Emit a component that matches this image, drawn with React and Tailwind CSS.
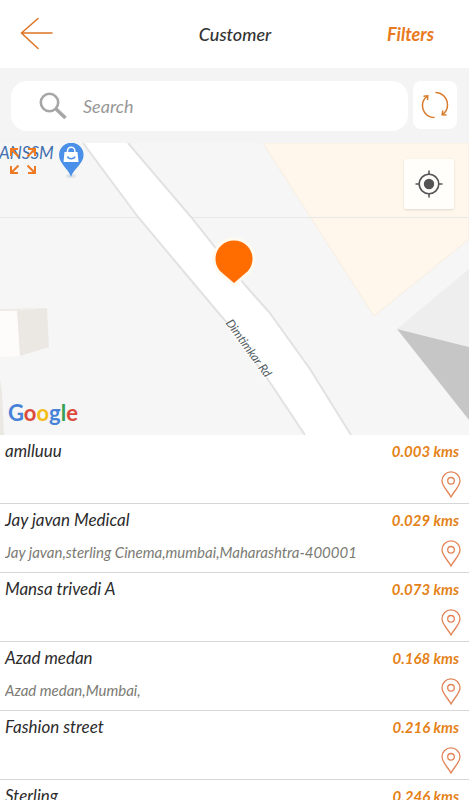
import { useState } from "react";

const customers = [
  { id: 1, name: "amlluuu", address: "", distance: "0.003" },
  {
    id: 2,
    name: "Jay javan Medical",
    address: "Jay javan,sterling Cinema,mumbai,Maharashtra-400001",
    distance: "0.029",
  },
  { id: 3, name: "Mansa trivedi A", address: "", distance: "0.073" },
  { id: 4, name: "Azad medan", address: "Azad medan,Mumbai,", distance: "0.168" },
  { id: 5, name: "Fashion street", address: "", distance: "0.216" },
  { id: 6, name: "Sterling", address: "", distance: "0.246" },
];

const BackIcon = () => (
  <svg width="34" height="34" viewBox="0 0 34 34" fill="none" stroke="#dd7424" strokeWidth="1.5" strokeLinecap="round">
    <path d="M18 1.5 1.5 16 18 31.5M1.5 16H32" />
  </svg>
);

const SearchIcon = () => (
  <svg className="shrink-0" width="28" height="28" viewBox="0 0 28 28" fill="none" stroke="#a6a6a6">
    <circle cx="10.5" cy="10.5" r="8.7" strokeWidth="2.6" />
    <path d="m17 17 9.5 9" strokeWidth="3.6" />
  </svg>
);

const RefreshIcon = () => (
  <svg width="28" height="28" viewBox="0 0 28 28" fill="none" stroke="#d87a2c" strokeWidth="1.5">
    <path d="M14.5 1.5C21.5 1.5 26.5 7.500 26.500 14c0 4-1.800 7.300-5 9.600" />
    <path d="M21.800 19.500l-.6 4.200 4.300.2" />
    <path d="M13.500 26.500C6.500 26.500 1.500 21 1.500 14.500c0-3.700 1.600-7.200 5-9.500" />
    <path d="M2.500 5.200 6.800 4.800 6.500 9" />
  </svg>
);

const ExpandIcon = () => (
  <svg width="28" height="28" viewBox="0 0 28 28" fill="none" stroke="#ee7a24" strokeWidth="2">
    <path d="M2 9V2h7M2 2l7.500 7.500M19 2h7v7M26 2l-7.500 7.500" />
    <path d="M2 19v7h7M2 26l7.500-7.500M19 26h7v-7M26 26l-7.500-7.500" />
  </svg>
);

const LocateIcon = () => (
  <svg width="28" height="28" viewBox="0 0 28 28" fill="none" stroke="#555555" strokeWidth="1.6">
    <circle cx="14" cy="14" r="9.8" />
    <circle cx="14" cy="14" r="5.2" fill="#555555" stroke="none" />
    <path d="M14 .5V4M14 24v3.5M.5 14H4M24 14h3.5" />
  </svg>
);

const PinIcon = () => (
  <svg width="20" height="27" viewBox="0 0 20 27" fill="none" stroke="#e28355" strokeWidth="1.3">
    <path d="M10 26C7 20 1 15.5 1 9.800a9 9 0 0 1 18 0C19 15.5 13 20 10 26Z" />
    <circle cx="10" cy="9.8" r="3.3" />
  </svg>
);

const MapCanvas = () => (
  <svg
    className="block h-full w-full"
    viewBox="0 0 469 292"
    preserveAspectRatio="xMidYMid slice"
    role="img"
    aria-label="Map"
  >
    <rect width="469" height="292" fill="#f6f6f6" />
    <path d="M263 0H469V96L374 173Z" fill="#fff6ec" stroke="#f6e9d8" strokeWidth=".7" />
    <path d="M397 186 469 126V204Z" fill="#eeeeee" />
    <path d="M397 186 469 204V277Z" fill="#c6c6c6" />

    {/* buildings */}
    <path d="M0 166 47 165 18 168H0Z" fill="#efebe7" />
    <path d="M0 168H18L20 213 0 214Z" fill="#fdfcfa" />
    <path d="M17 168 47 165 49 204 20 213Z" fill="#ebe8e4" />
    <path d="M0 236 2 250 4 292H0Z" fill="#ebe8e4" />

    <path d="M0 74.5H469" stroke="#e8e8e8" />

    {/* road */}
    <path d="M83 0 138 74 195 142 228 181 267 235 305 292H351L310 226 269 169 245 142 191 74 128 0Z" fill="#ffffff" />
    <path
      d="M83 0 138 74 195 142 228 181 267 235 305 292M351 292 310 226 269 169 245 142 191 74 128 0"
      fill="none"
      stroke="#e2e2e2"
      strokeWidth="2"
    />
    <text
      transform="translate(249 205) rotate(54)"
      textAnchor="middle"
      dominantBaseline="central"
      fontSize="12"
      fontStyle="italic"
      fill="#515a60"
      stroke="#ffffff"
      strokeWidth="2"
      paintOrder="stroke"
    >
      Dimtimkar Rd
    </text>

    {/* shop */}
    <ellipse cx="71" cy="33" rx="5" ry="2" fill="#dfe3e8" />
    <path d="M71 34C69 26 59 21 59 12a12.300 12.300 0 0 1 24.600 0C83.600 21 73 26 71 34Z" fill="#4a90e8" />
    <path d="M64.5 9H77.500L78.500 19H63.500Z" fill="#ffffff" />
    <path d="M67.5 9V8a3.700 3.700 0 0 1 7.400 0v1" fill="none" stroke="#ffffff" strokeWidth="1.5" />
    <path d="M67.5 13.500c1 3 6.500 3 7.500 0" fill="none" stroke="#4a90e8" strokeWidth="1.5" />
    <text x="-1" y="16" fontSize="17" fontStyle="italic" fill="#3f6fae">
      ANSSM
    </text>

    <path
      d="M234 140 220 128a18.500 18.500 0 1 1 28 0Z"
      fill="#ff6d00"
      stroke="#fffaf0"
      strokeWidth="6"
      strokeLinejoin="round"
      paintOrder="stroke"
    />
  </svg>
);

const CustomerRow = ({ customer }) => (
  <li className="flex h-[69px] shrink-0 justify-between border-b border-[#d6d6d6] pl-[5px] pr-2">
    <div className="min-w-0 pt-1.5">
      <h2 className="text-[17px] leading-5 text-[#2b2b2b]">{customer.name}</h2>
      {customer.address && (
        <p className="mt-3 truncate text-[15px] leading-5 text-[#7b7b74]">{customer.address}</p>
      )}
    </div>
    <div className="flex shrink-0 flex-col items-end pt-1.5">
      <span className="pr-0.5 text-[15px] font-bold leading-5 text-[#e58217]">{customer.distance} kms</span>
      <button type="button" className="mt-2.5" aria-label={`Show ${customer.name} on map`}>
        <PinIcon />
      </button>
    </div>
  </li>
);

const App = () => {
  const [search, setSearch] = useState("");

  return (
    <div className="flex h-screen flex-col overflow-hidden bg-white font-['Lato',sans-serif] italic">
      <header className="grid h-[68px] shrink-0 grid-cols-3 items-center pl-5 pr-[35px]">
        <button type="button" className="justify-self-start" aria-label="Back">
          <BackIcon />
        </button>
        <h1 className="justify-self-center pl-4 text-lg font-medium text-[#333333]">Customer</h1>
        <button type="button" className="justify-self-end text-lg font-bold text-[#e9791f]">
          Filters
        </button>
      </header>

      <div className="flex h-[75px] shrink-0 gap-[5px] bg-[#f4f4f4] pb-3 pl-[11px] pr-3 pt-[13px]">
        <label className="flex min-w-0 flex-1 items-center gap-4 rounded-2xl bg-white pl-7">
          <SearchIcon />
          <input
            type="text"
            aria-label="Search"
            value={search}
            onChange={(e) => setSearch(e.target.value)}
            className="w-full min-w-0 bg-transparent text-lg italic text-gray-700 placeholder-[#979797] focus:outline-none"
            placeholder="Search"
          />
        </label>
        <button
          type="button"
          className="flex h-12 w-11 items-center justify-center rounded-lg bg-white"
          aria-label="Refresh"
        >
          <RefreshIcon />
        </button>
      </div>

      <section className="relative h-[292px] shrink-0">
        <MapCanvas />
        <button type="button" className="absolute left-[9px] top-1" aria-label="Expand map">
          <ExpandIcon />
        </button>
        <button
          type="button"
          className="absolute right-[15px] top-4 flex size-[50px] items-center justify-center rounded-xs bg-[#fffefb] shadow"
          aria-label="My location"
        >
          <LocateIcon />
        </button>
        <div className="absolute bottom-2 left-2 text-[22px] font-bold not-italic leading-7">
          <span className="text-[#4682d8]">G</span>
          <span className="text-[#db4a3b]">o</span>
          <span className="text-[#f3bd17]">o</span>
          <span className="text-[#4682d8]">g</span>
          <span className="text-[#36a156]">l</span>
          <span className="text-[#db4a3b]">e</span>
        </div>
      </section>

      <ul className="flex min-h-0 flex-1 flex-col overflow-hidden">
        {customers.map((customer) => (
          <CustomerRow key={customer.id} customer={customer} />
        ))}
      </ul>
    </div>
  );
};

export default App;
